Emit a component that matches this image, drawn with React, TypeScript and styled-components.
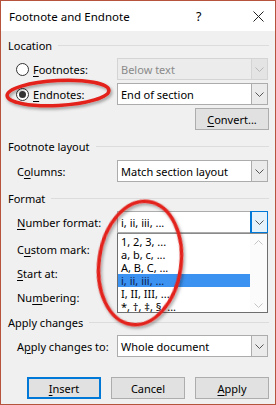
import React from "react";
import styled, { createGlobalStyle } from "styled-components";

const GlobalStyle = createGlobalStyle`
  body {
    margin: 0;
    background: #ffffff;
  }
`;

const Window = styled.div`
  position: relative;
  width: 276px;
  height: 405px;
  box-sizing: border-box;
  border: 1px solid #b5533f;
  background: #f0f0f0;
  font-family: "Noto Sans", "Open Sans", sans-serif;
  font-size: 11px;
  color: #000;
  overflow: hidden;
`;

const TitleBar = styled.div`
  height: 30px;
  background: #fff;
  display: flex;
  align-items: center;
  padding-left: 8px;
`;

const Title = styled.div`
  flex: 1;
  font-size: 11.5px;
`;

const HelpMark = styled.div`
  width: 14px;
  margin-right: 33px;
  font-size: 12.5px;
`;

const CloseBox = styled.div`
  width: 30px;
  display: flex;
  justify-content: center;
  margin-right: 2px;
`;

const Body = styled.div`
  padding: 6px 6px 0 7px;
`;

const Heading = styled.div<{ $mt?: number }>`
  display: flex;
  align-items: center;
  gap: 6px;
  height: 16px;
  margin-top: ${(p) => p.$mt ?? 0}px;
  &::after {
    content: "";
    flex: 1;
    height: 1px;
    background: #dcdcdc;
  }
`;

const Row = styled.div<{ $mt?: number }>`
  display: flex;
  align-items: center;
  height: 22px;
  padding-left: 9px;
  margin-top: ${(p) => p.$mt ?? 0}px;
`;

const EndRow = styled(Row)`
  justify-content: flex-end;
  padding-left: 0;
`;

const Label = styled.div`
  width: 100px;
  flex: none;
  white-space: nowrap;
  display: flex;
  align-items: center;
`;

const RadioLabel = styled(Label)`
  margin-left: -1px;
  width: 101px;
  gap: 4px;
`;

const Radio = styled.span<{ $checked?: boolean }>`
  width: 11px;
  height: 11px;
  border: 1px solid #333;
  border-radius: 50%;
  background: #fff;
  display: inline-flex;
  align-items: center;
  justify-content: center;
  &::after {
    content: "";
    width: 7px;
    height: 7px;
    border-radius: 50%;
    background: ${(p) => (p.$checked ? "#333" : "transparent")};
  }
`;

const Key = styled.span`
  text-decoration: underline;
  text-underline-offset: 2px;
`;

const SelectWrap = styled.div`
  position: relative;
`;

const Select = styled.div<{ $disabled?: boolean }>`
  width: 151px;
  height: 22px;
  box-sizing: border-box;
  display: flex;
  border: 1px solid ${(p) => (p.$disabled ? "#d4d4d4" : "#acacac")};
  background: ${(p) => (p.$disabled ? "#ececec" : "#fff")};
  color: ${(p) => (p.$disabled ? "#8a8a8a" : "#000")};
`;

const SelectText = styled.div`
  flex: 1;
  padding-left: 3px;
  display: flex;
  align-items: center;
  white-space: nowrap;
`;

const ArrowBox = styled.div<{ $active?: boolean; $disabled?: boolean }>`
  width: 16px;
  box-sizing: border-box;
  display: flex;
  align-items: center;
  justify-content: center;
  border-left: 1px solid ${(p) => (p.$active ? "#0078d7" : p.$disabled ? "#d4d4d4" : "#acacac")};
  background: ${(p) => (p.$active ? "#e5f1fb" : p.$disabled ? "#e4e4e4" : "#ebebeb")};
  outline: ${(p) => (p.$active ? "1px solid #0078d7" : "none")};
`;

const Button = styled.div<{ $default?: boolean }>`
  width: 74px;
  height: 22px;
  box-sizing: border-box;
  display: flex;
  align-items: center;
  justify-content: center;
  background: #e1e1e1;
  border: ${(p) => (p.$default ? "2px solid #0078d7" : "1px solid #adadad")};
`;

const ButtonRow = styled.div`
  display: flex;
  justify-content: flex-end;
  gap: 10px;
  margin-top: 20px;
`;

const ListBox = styled.div`
  position: absolute;
  top: 100%;
  left: 0;
  width: 151px;
  height: 80px;
  box-sizing: border-box;
  border: 1px solid #6e6e6e;
  border-top-color: #8a8a8a;
  background: #fff;
  display: flex;
  z-index: 2;
`;

const Items = styled.div`
  flex: 1;
  padding-top: 1px;
  overflow: hidden;
`;

const Item = styled.div<{ $selected?: boolean }>`
  height: 13px;
  line-height: 13px;
  padding-left: 3px;
  white-space: nowrap;
  background: ${(p) => (p.$selected ? "#3c92f0" : "transparent")};
  color: ${(p) => (p.$selected ? "#10204a" : "#000")};
`;

const ScrollBar = styled.div`
  width: 17px;
  display: flex;
  flex-direction: column;
  justify-content: space-between;
  align-items: center;
  padding: 6px 0 4px;
  background: #fbfbfb;
`;

const Annotations = styled.svg`
  position: absolute;
  left: 0;
  top: 0;
  pointer-events: none;
  z-index: 5;
`;

const Chevron = ({ up, color = "#444" }: { up?: boolean; color?: string }) => (
  <svg width="9" height="5" viewBox="0 0 9 5">
    <polyline
      points={up ? "0.5,4.5 4.5,0.5 8.5,4.5" : "0.5,0.5 4.5,4.5 8.5,0.5"}
      fill="none"
      stroke={color}
      strokeWidth="1"
    />
  </svg>
);

const Dropdown = ({
  text,
  disabled,
  active,
}: {
  text: string;
  disabled?: boolean;
  active?: boolean;
}) => (
  <Select $disabled={disabled}>
    <SelectText>{text}</SelectText>
    <ArrowBox $active={active} $disabled={disabled}>
      <Chevron color={disabled ? "#b8b8b8" : "#555"} />
    </ArrowBox>
  </Select>
);

const formats = ["1, 2, 3, ...", "a, b, c, ...", "A, B, C, ...", "i, ii, iii, ...", "I, II, III, ...", "*, †, ‡, §, ..."];

export default function App() {
  return (
    <>
      <GlobalStyle />
      <Window>
        <TitleBar>
          <Title>Footnote and Endnote</Title>
          <HelpMark>?</HelpMark>
          <CloseBox>
            <svg width="11" height="11" viewBox="0 0 11 11">
              <path d="M0.5 0.5 L10.5 10.5 M10.5 0.5 L0.5 10.5" stroke="#222" strokeWidth="1" />
            </svg>
          </CloseBox>
        </TitleBar>
        <Body>
          <Heading>Location</Heading>
          <Row $mt={5}>
            <RadioLabel>
              <Radio />
              <span>
                <Key>F</Key>ootnotes:
              </span>
            </RadioLabel>
            <Dropdown text="Below text" disabled />
          </Row>
          <Row $mt={3}>
            <RadioLabel>
              <Radio $checked />
              <span>
                <Key>E</Key>ndnotes:
              </span>
            </RadioLabel>
            <Dropdown text="End of section" />
          </Row>
          <EndRow $mt={3}>
            <Button>
              <span>
                <Key>C</Key>onvert...
              </span>
            </Button>
          </EndRow>

          <Heading $mt={8}>Footnote layout</Heading>
          <Row $mt={6}>
            <Label>
              <span>
                C<Key>o</Key>lumns:
              </span>
            </Label>
            <Dropdown text="Match section layout" />
          </Row>

          <Heading $mt={8}>Format</Heading>
          <Row $mt={5}>
            <Label>
              <span>
                <Key>N</Key>umber format:
              </span>
            </Label>
            <SelectWrap>
              <Dropdown text="i, ii, iii, ..." active />
              <ListBox>
                <Items>
                  {formats.map((f, i) => (
                    <Item key={f} $selected={i === 3}>
                      {f}
                    </Item>
                  ))}
                </Items>
                <ScrollBar>
                  <Chevron up color="#c4c4c4" />
                  <Chevron color="#c4c4c4" />
                </ScrollBar>
              </ListBox>
            </SelectWrap>
          </Row>
          <Row $mt={5}>
            <Label>
              <span>
                C<Key>u</Key>stom mark:
              </span>
            </Label>
          </Row>
          <Row $mt={2}>
            <Label>
              <span>
                <Key>S</Key>tart at:
              </span>
            </Label>
          </Row>
          <Row $mt={2}>
            <Label>
              <span>
                Nu<Key>m</Key>bering:
              </span>
            </Label>
          </Row>

          <Heading $mt={6}>Apply changes</Heading>
          <Row $mt={5}>
            <Label>
              <span>
                A<Key>p</Key>ply changes to:
              </span>
            </Label>
            <Dropdown text="Whole document" />
          </Row>

          <ButtonRow>
            <Button $default>
              <span>
                <Key>I</Key>nsert
              </span>
            </Button>
            <Button>Cancel</Button>
            <Button>
              <span>
                <Key>A</Key>pply
              </span>
            </Button>
          </ButtonRow>
        </Body>

        <Annotations width="276" height="405" viewBox="0 0 276 405">
          <defs>
            <filter id="shade" x="-20%" y="-20%" width="140%" height="140%">
              <feDropShadow dx="1.5" dy="2" stdDeviation="1.5" floodColor="#000" floodOpacity="0.35" />
            </filter>
          </defs>
          <g fill="none" stroke="#e3201b" strokeWidth="3.5" filter="url(#shade)">
            <ellipse cx="57" cy="92" rx="51" ry="12.5" transform="rotate(-3 57 92)" />
            <ellipse cx="139" cy="262" rx="41" ry="62" transform="rotate(8 139 262)" />
          </g>
        </Annotations>
      </Window>
    </>
  );
}
